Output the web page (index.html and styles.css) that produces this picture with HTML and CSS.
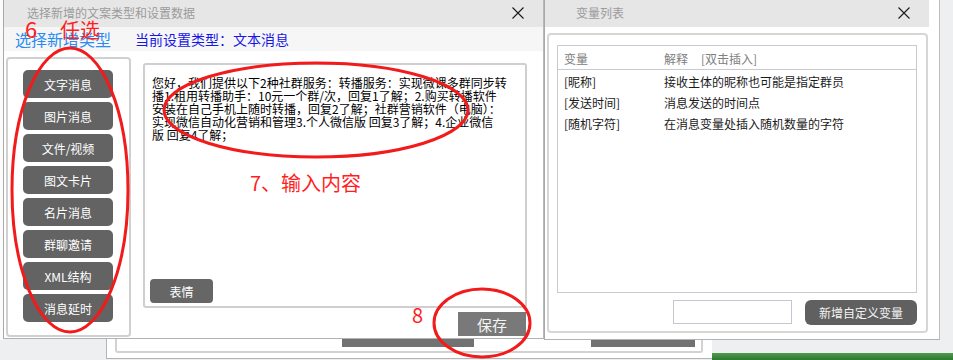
FILE: index.html
```html
<!DOCTYPE html>
<html lang="zh-CN">
<head>
    <meta charset="UTF-8">
    <title>选择新增的文案类型和设置数据</title>
    <link rel="stylesheet" href="styles.css">
</head>
<body>
<div class="desktop">
    <div class="back-app"></div>

    <div class="back-win">
        <div class="back-inner">
            <span class="back-bar bar-a"></span>
            <span class="back-bar bar-b"></span>
        </div>
    </div>
    <div class="green-win"></div>

    <!-- 选择文案类型 -->
    <div class="win win-main">
        <div class="titlebar">
            <span class="title">选择新增的文案类型和设置数据</span>
            <svg class="close" width="12" height="12" viewBox="0 0 12 12"><path d="M0.5 0.5 L11.5 11.5 M11.5 0.5 L0.5 11.5" stroke="#1a1a1a" stroke-width="1.1" fill="none"/></svg>
        </div>
        <div class="head">
            <span class="head-pick">选择新增类型</span>
            <span class="head-cur">当前设置类型：文本消息</span>
        </div>
        <div class="main-body">
            <div class="type-panel">
                <button class="type-btn">文字消息</button>
                <button class="type-btn">图片消息</button>
                <button class="type-btn">文件/视频</button>
                <button class="type-btn">图文卡片</button>
                <button class="type-btn">名片消息</button>
                <button class="type-btn">群聊邀请</button>
                <button class="type-btn">XML结构</button>
                <button class="type-btn">消息延时</button>
            </div>
            <div class="editor-col">
                <div class="editor">
                    <div class="editor-text">您好，我们提供以下2种社群服务：转播服务：实现微课多群同步转<br>播1.租用转播助手：10元一个群/次，回复1了解；2.购买转播软件<br>安装在自己手机上随时转播，回复2了解；社群营销软件（电脑）：<br>实现微信自动化营销和管理3.个人微信版 回复3了解；4.企业微信<br>版 回复4了解；</div>
                    <button class="emoji-btn">表情</button>
                </div>
                <div class="save-row">
                    <button class="save-btn">保存</button>
                </div>
            </div>
        </div>
    </div>

    <!-- 变量列表 -->
    <div class="win win-vars">
        <div class="titlebar vars-title">
            <span class="title">变量列表</span>
            <svg class="close" width="12" height="12" viewBox="0 0 12 12"><path d="M0.5 0.5 L11.5 11.5 M11.5 0.5 L0.5 11.5" stroke="#1a1a1a" stroke-width="1.1" fill="none"/></svg>
        </div>
        <div class="vars-box">
            <div class="var-table">
                <div class="var-row var-head">
                    <span class="var-name">变量</span>
                    <span class="var-desc">解释<span class="var-hint">[双击插入]</span></span>
                </div>
                <div class="var-list">
                    <div class="var-row">
                        <span class="var-name">[昵称]</span>
                        <span class="var-desc">接收主体的昵称也可能是指定群员</span>
                    </div>
                    <div class="var-row">
                        <span class="var-name">[发送时间]</span>
                        <span class="var-desc">消息发送的时间点</span>
                    </div>
                    <div class="var-row">
                        <span class="var-name">[随机字符]</span>
                        <span class="var-desc">在消息变量处插入随机数量的字符</span>
                    </div>
                </div>
            </div>
            <div class="vars-foot">
                <input type="text" class="var-input">
                <button class="add-btn">新增自定义变量</button>
            </div>
        </div>
    </div>

    <!-- 标注 -->
    <svg class="marks" width="953" height="360" viewBox="0 0 953 360">
        <g fill="none" stroke="#f21a1a" stroke-width="3">
            <ellipse cx="70" cy="190" rx="58" ry="142"/>
            <ellipse cx="316" cy="110" rx="152" ry="47"/>
            <ellipse cx="482" cy="323" rx="48" ry="34"/>
        </g>
        <g fill="#ff1f1f" class="mark-text">
            <text x="25" y="38" font-size="22">6</text>
            <text x="60" y="38" font-size="20">任选</text>
            <text x="250" y="191" font-size="20">7、输入内容</text>
            <text x="412" y="323" font-size="20">8</text>
        </g>
    </svg>
</div>
</body>
</html>
```

FILE: styles.css
```css
* {
    box-sizing: border-box;
}
body {
    margin: 0;
    font-family: "Noto Sans CJK SC", "Noto Sans", sans-serif;
    font-size: 12px;
    background-color: #eeeff1;
}
button {
    font-family: inherit;
    border: none;
    padding: 0;
    cursor: pointer;
}
.desktop {
    position: relative;
    width: 953px;
    height: 360px;
    overflow: hidden;
}

/* windows behind */
.back-app {
    position: absolute;
    left: 0;
    top: 0;
    width: 4px;
    height: 340px;
    background-color: #fbfbfb;
}
.back-win {
    position: absolute;
    left: 106px;
    top: 320px;
    width: 606px;
    height: 39px;
    background-color: #fff;
    border-left: 1px solid #b4b4b4;
    border-bottom: 1px solid #b4b4b4;
}
.back-inner {
    display: flex;
    margin-left: 8px;
    width: 588px;
    height: 33px;
    padding-top: 19px;
    border: 2px solid #d2d2d2;
    border-top: none;
    border-radius: 0 0 3px 3px;
}
.back-bar {
    height: 8px;
    background-color: #727272;
}
.bar-a {
    margin-left: 225px;
    width: 132px;
}
.bar-b {
    margin-left: 117px;
    width: 104px;
}
.green-win {
    position: absolute;
    left: 712px;
    top: 353px;
    width: 241px;
    height: 7px;
    background: linear-gradient(#4f9a4f, #2b7a2e);
}

/* common window */
.win {
    position: absolute;
    top: 0;
    background-color: #fff;
    border-left: 1px solid #a9a9a9;
    border-bottom: 1px solid #b2b2b2;
}
.titlebar {
    display: flex;
    align-items: center;
    justify-content: space-between;
    height: 27px;
    background-color: #e6e6e6;
    padding-bottom: 2px;
}
.title {
    color: #9b9b9b;
    font-size: 12px;
}
.close {
    display: block;
}

/* main dialog */
.win-main {
    left: 3px;
    width: 541px;
    height: 339px;
    border-right: 1px solid #b9b9b9;
}
.win-main .titlebar {
    padding-left: 23px;
    padding-right: 19px;
}
.head {
    display: flex;
    align-items: center;
    gap: 24px;
    height: 24px;
    padding-left: 11px;
    background-color: #f6f6f6;
}
.head-pick {
    color: #2a8bf2;
    font-size: 16px;
}
.head-cur {
    color: #1616e6;
    font-size: 14px;
}
.main-body {
    display: flex;
    align-items: flex-start;
}
.type-panel {
    display: flex;
    flex-direction: column;
    gap: 4px;
    width: 125px;
    height: 280px;
    margin: 6px 0 0 2px;
    padding: 11px 0 0 15px;
    border: 2px solid #d0d0d0;
    border-radius: 4px;
}
.type-btn {
    width: 90px;
    height: 28px;
    background-color: #636363;
    color: #fff;
    font-size: 12px;
    border-radius: 5px;
}
.editor-col {
    margin: 12px 0 0 12px;
}
.editor {
    display: flex;
    flex-direction: column;
    align-items: flex-start;
    width: 384px;
    height: 245px;
    padding: 11px 5px 3px 5px;
    border: 2px solid #cfcfcf;
    border-radius: 3px;
}
.editor-text {
    flex: 1;
    padding-left: 2px;
    font-size: 12px;
    line-height: 13px;
    color: #000;
    white-space: nowrap;
}
.emoji-btn {
    width: 63px;
    height: 24px;
    background-color: #666;
    color: #fff;
    font-size: 12px;
    border-radius: 4px;
}
.save-row {
    display: flex;
    justify-content: flex-end;
    margin-top: 4px;
    padding-right: 1px;
}
.save-btn {
    width: 68px;
    height: 24px;
    background-color: #797979;
    color: #f4f4f4;
    font-size: 15px;
}

/* variable list */
.win-vars {
    left: 544px;
    width: 396px;
    height: 340px;
    border-right: 1px solid #bdbdbd;
}
.vars-title {
    margin-right: 10px;
    padding-left: 31px;
    padding-right: 19px;
}
.vars-box {
    display: flex;
    flex-direction: column;
    width: 381px;
    height: 300px;
    margin: 6px 0 0 2px;
    padding: 10px 9px 6px 8px;
    border: 2px solid #d6d6d6;
    border-radius: 4px;
}
.var-table {
    width: 360px;
    height: 248px;
    border: 1px solid #c9c9d4;
}
.var-row {
    display: flex;
    height: 21px;
    line-height: 21px;
    padding-left: 6px;
    color: #1a1a1a;
}
.var-head {
    height: 24px;
    line-height: 24px;
    padding-top: 1px;
    color: #808080;
    border-bottom: 1px solid #c9c9d4;
}
.var-name {
    width: 100px;
}
.var-hint {
    margin-left: 13px;
}
.var-list {
    padding-top: 1px;
}
.vars-foot {
    display: flex;
    justify-content: flex-end;
    align-items: flex-start;
    gap: 13px;
    margin-top: 7px;
}
.var-input {
    width: 119px;
    height: 24px;
    border: 1px solid #c6c6d0;
    margin: 0;
}
.add-btn {
    width: 112px;
    height: 25px;
    background-color: #606060;
    color: #f4f4f4;
    font-size: 12px;
    border-radius: 6px;
}

/* annotations */
.marks {
    position: absolute;
    left: 0;
    top: 0;
    pointer-events: none;
}
.mark-text {
    font-family: "Noto Sans CJK SC", sans-serif;
}
```
